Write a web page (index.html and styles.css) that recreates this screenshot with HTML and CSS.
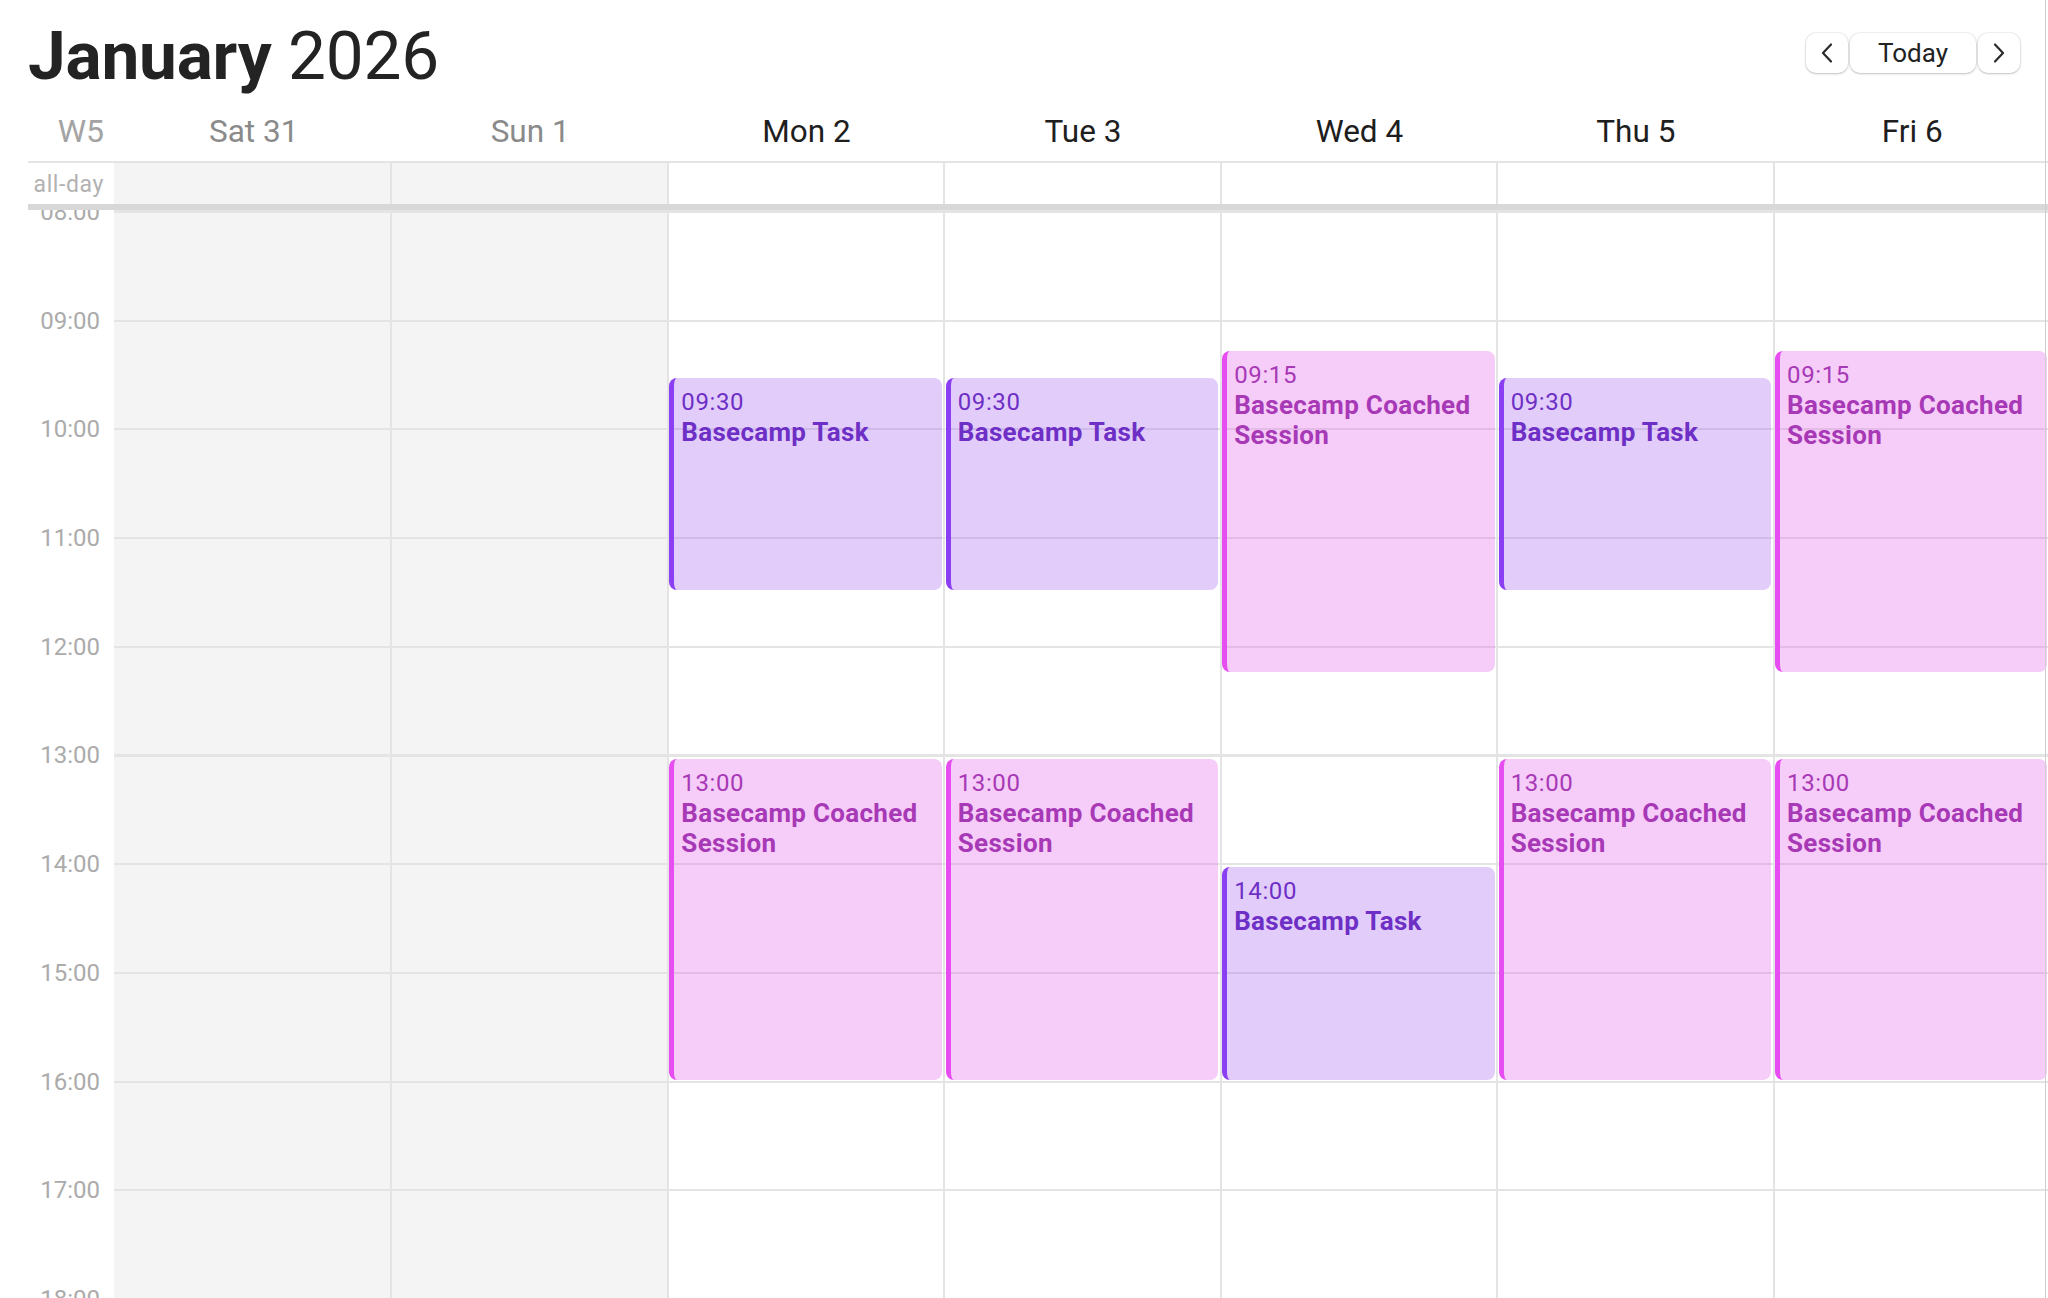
FILE: index.html
```html
<!DOCTYPE html>
<html lang="en">
<head>
<meta charset="utf-8">
<title>January 2026</title>
<link rel="stylesheet" href="styles.css">
</head>
<body>
<div class="app">
  <header class="top">
    <h1 class="title"><b>January</b> 2026</h1>
    <div class="nav">
      <button class="btn btn-icon" aria-label="Previous"><svg width="14" height="22" viewBox="0 0 14 22"><path d="M11 2.5 L3 11 L11 19.5" fill="none" stroke="#2a2a2a" stroke-width="2.2" stroke-linecap="round" stroke-linejoin="round"/></svg></button>
      <button class="btn btn-today">Today</button>
      <button class="btn btn-icon" aria-label="Next"><svg width="14" height="22" viewBox="0 0 14 22"><path d="M3 2.5 L11 11 L3 19.5" fill="none" stroke="#2a2a2a" stroke-width="2.2" stroke-linecap="round" stroke-linejoin="round"/></svg></button>
    </div>
  </header>

  <div class="cal">
    <div class="row dayhead">
      <div class="gutter wk">W5</div>
      <div class="dh dh-weekend">Sat 31</div>
      <div class="dh dh-weekend">Sun 1</div>
      <div class="dh">Mon 2</div>
      <div class="dh">Tue 3</div>
      <div class="dh">Wed 4</div>
      <div class="dh">Thu 5</div>
      <div class="dh">Fri 6</div>
    </div>

    <div class="row allday">
      <div class="gutter ad-label">all-day</div>
      <div class="adcell weekend first"></div>
      <div class="adcell weekend"></div>
      <div class="adcell"></div>
      <div class="adcell"></div>
      <div class="adcell"></div>
      <div class="adcell"></div>
      <div class="adcell"></div>
    </div>

    <div class="divider"></div>

    <div class="row body">
      <div class="gutter times">
        <div class="hour"><span>08:00</span></div>
        <div class="hour"><span>09:00</span></div>
        <div class="hour"><span>10:00</span></div>
        <div class="hour"><span>11:00</span></div>
        <div class="hour"><span>12:00</span></div>
        <div class="hour"><span>13:00</span></div>
        <div class="hour"><span>14:00</span></div>
        <div class="hour"><span>15:00</span></div>
        <div class="hour"><span>16:00</span></div>
        <div class="hour"><span>17:00</span></div>
        <div class="hour"><span>18:00</span></div>
      </div>

      <div class="col weekend first"></div>
      <div class="col weekend"></div>

      <div class="col">
        <div class="ev task" style="--s:1.5;--d:2"><div class="ev-time">09:30</div><div class="ev-name">Basecamp Task</div></div>
        <div class="ev coach" style="--s:5;--d:3"><div class="ev-time">13:00</div><div class="ev-name">Basecamp Coached Session</div></div>
      </div>

      <div class="col">
        <div class="ev task" style="--s:1.5;--d:2"><div class="ev-time">09:30</div><div class="ev-name">Basecamp Task</div></div>
        <div class="ev coach" style="--s:5;--d:3"><div class="ev-time">13:00</div><div class="ev-name">Basecamp Coached Session</div></div>
      </div>

      <div class="col">
        <div class="ev coach" style="--s:1.25;--d:3"><div class="ev-time">09:15</div><div class="ev-name">Basecamp Coached Session</div></div>
        <div class="ev task" style="--s:6;--d:2"><div class="ev-time">14:00</div><div class="ev-name">Basecamp Task</div></div>
      </div>

      <div class="col">
        <div class="ev task" style="--s:1.5;--d:2"><div class="ev-time">09:30</div><div class="ev-name">Basecamp Task</div></div>
        <div class="ev coach" style="--s:5;--d:3"><div class="ev-time">13:00</div><div class="ev-name">Basecamp Coached Session</div></div>
      </div>

      <div class="col">
        <div class="ev coach" style="--s:1.25;--d:3"><div class="ev-time">09:15</div><div class="ev-name">Basecamp Coached Session</div></div>
        <div class="ev coach" style="--s:5;--d:3"><div class="ev-time">13:00</div><div class="ev-name">Basecamp Coached Session</div></div>
      </div>
    </div>
  </div>
</div>
</body>
</html>
```

FILE: styles.css
```css
html, body {
  margin: 0;
  height: 100%;
  overflow: hidden;
  background: #ffffff;
}

body {
  font-family: Roboto, "Liberation Sans", sans-serif;
  color: #222222;
}

body::after {
  content: "";
  position: fixed;
  top: 0;
  bottom: 0;
  right: 2px;
  width: 1px;
  background: #cdcdcd;
}

.app {
  height: 1298px;
  display: flex;
  flex-direction: column;
}

/* ---------- top bar ---------- */
.top {
  height: 96px;
  flex: none;
  display: flex;
  justify-content: space-between;
  align-items: flex-start;
  padding: 0 28px 0 28px;
  box-sizing: border-box;
}

.title {
  margin: 23px 0 0 0;
  font-size: 67.5px;
  line-height: 66px;
  font-weight: 400;
  color: #232323;
  letter-spacing: -0.2px;
}

.title b {
  font-weight: 700;
}

.nav {
  display: flex;
  gap: 2px;
  margin-top: 33px;
}

.btn {
  height: 40px;
  border: 0;
  padding: 0;
  background: #ffffff;
  border-radius: 10px;
  box-shadow: 0 0 0 1px rgba(0, 0, 0, 0.05), 0 1px 2.5px rgba(0, 0, 0, 0.2);
  display: flex;
  align-items: center;
  justify-content: center;
  font-family: inherit;
  color: #222222;
}

.btn-icon {
  width: 42px;
}

.btn-today {
  width: 126px;
  font-size: 26px;
}

/* ---------- calendar ---------- */
.cal {
  width: 2021px;
  margin-left: 28px;
  flex: 1;
  min-height: 0;
  display: flex;
  flex-direction: column;
}

.row {
  display: grid;
  grid-template-columns: 86px repeat(7, 1fr);
}

.dayhead {
  height: 65px;
  flex: none;
  border-bottom: 2px solid #e4e4e4;
}

.gutter {
  text-align: right;
}

.wk {
  padding: 20px 10px 0 0;
  font-size: 32px;
  line-height: 31px;
  color: #a3a3a3;
}

.dh {
  padding: 20px 0 0 3px;
  font-size: 31.5px;
  line-height: 31px;
  text-align: center;
  color: #1e1e1e;
}

.dh-weekend {
  color: #8a8a8a;
}

.allday {
  height: 41px;
  flex: none;
}

.ad-label {
  padding: 10px 10px 0 0;
  font-size: 23px;
  line-height: 23px;
  letter-spacing: 0.6px;
  color: #b2b2b2;
}

.adcell {
  border-left: 2px solid #e4e4e4;
}

.adcell.first {
  border-left: 0;
}

.weekend {
  background-color: #f4f4f4;
}

.divider {
  height: 6px;
  flex: none;
  background: #d8d8d8;
}

.body {
  flex: 1;
  min-height: 0;
  overflow: hidden;
}

.times {
  padding-top: 2px;
}

.hour {
  height: 108.7px;
}

.hour span {
  display: block;
  transform: translateY(-50%);
  padding-right: 14px;
  font-size: 24px;
  line-height: 28px;
  color: #ababab;
}

.col {
  position: relative;
  border-left: 2px solid #e4e4e4;
  background-image: repeating-linear-gradient(to bottom, #e4e4e4 0, #e4e4e4 2px, transparent 2px, transparent 108.7px);
  background-position: 0 1px;
}

.col.first {
  border-left: 0;
}

/* ---------- events ---------- */
.ev {
  position: absolute;
  left: 0.5px;
  right: 1.5px;
  top: calc(var(--s) * 108.7px + 5px);
  height: calc(var(--d) * 108.7px - 5px);
  box-sizing: border-box;
  border-left: 5px solid;
  border-radius: 8px;
  padding: 9px 8px 0 7px;
  overflow: hidden;
}

.ev-time {
  font-size: 24px;
  line-height: 30px;
  letter-spacing: 0.6px;
}

.ev-name {
  font-size: 26px;
  line-height: 30px;
  font-weight: 700;
  letter-spacing: 0.3px;
}

.task {
  background: rgba(172, 112, 241, 0.35);
  border-left-color: #8b3ff3;
  color: #6e2fc6;
}

.coach {
  background: rgba(229, 109, 235, 0.35);
  border-left-color: #e64ef1;
  color: #a739b6;
}
```
